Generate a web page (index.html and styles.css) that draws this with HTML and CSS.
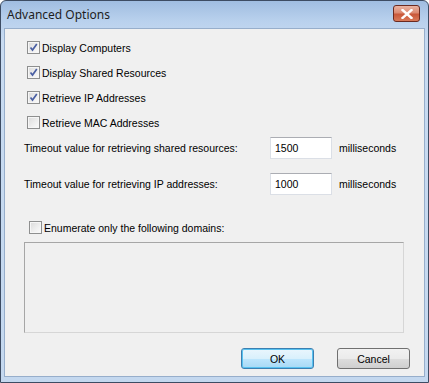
FILE: index.html
```html
<!DOCTYPE html>
<html lang="en">
<head>
    <meta charset="UTF-8">
    <title>Advanced Options</title>
    <link rel="stylesheet" href="styles.css">
</head>
<body>
    <div class="window">
        <div class="titlebar">
            <span class="title">Advanced Options</span>
            <span class="close-btn">
                <svg width="12" height="10" viewBox="0 0 12 10">
                    <path d="M1.5 1 L10.5 9 M10.5 1 L1.5 9" stroke="#fff" stroke-width="2.4" stroke-linecap="square"/>
                </svg>
            </span>
        </div>
        <div class="client">
            <div class="checks">
                <div class="check-row"><span class="box"><svg class="tick" viewBox="0 0 9 9"><path d="M1.5 4.5 L3.5 7 L7.8 1" /></svg></span>Display Computers</div>
                <div class="check-row"><span class="box"><svg class="tick" viewBox="0 0 9 9"><path d="M1.5 4.5 L3.5 7 L7.8 1" /></svg></span>Display Shared Resources</div>
                <div class="check-row"><span class="box"><svg class="tick" viewBox="0 0 9 9"><path d="M1.5 4.5 L3.5 7 L7.8 1" /></svg></span>Retrieve IP Addresses</div>
                <div class="check-row"><span class="box"></span>Retrieve MAC Addresses</div>
            </div>

            <div class="timeout-row">
                <span class="timeout-label">Timeout value for retrieving shared resources:</span>
                <span class="field">1500</span>
                <span class="unit">milliseconds</span>
            </div>
            <div class="timeout-row">
                <span class="timeout-label">Timeout value for retrieving IP addresses:</span>
                <span class="field">1000</span>
                <span class="unit">milliseconds</span>
            </div>

            <div class="check-row domains-row"><span class="box"></span>Enumerate only the following domains:</div>
            <div class="domain-list"></div>

            <div class="buttons">
                <span class="btn default">OK</span>
                <span class="btn">Cancel</span>
            </div>
        </div>
    </div>
</body>
</html>
```

FILE: styles.css
```css
body {
    margin: 0;
    padding: 0;
    background: #fff;
}

.window {
    width: 429px;
    height: 383px;
    box-sizing: border-box;
    border: 1px solid #3d4c63;
    border-radius: 6px 6px 0 0;
    background: linear-gradient(to bottom, #a0bde1 0px, #b9d1ed 20px, #c8dbf1 40px, #c4d8ef 100%);
    display: flex;
    flex-direction: column;
    padding: 0 3px 5px 3px;
}

.titlebar {
    height: 27px;
    display: flex;
    align-items: flex-start;
    justify-content: space-between;
}

.title {
    font-family: "Noto Sans", sans-serif;
    font-size: 12px;
    color: #1e1e1e;
    padding: 5px 0 0 3px;
}

.close-btn {
    margin: 4px 5px 0 0;
    width: 27px;
    height: 17px;
    box-sizing: border-box;
    border: 1px solid #6b2a20;
    border-radius: 3px;
    background: linear-gradient(to bottom, #eab3a2 0%, #dc8a72 45%, #c9583a 55%, #d87a5a 100%);
    display: flex;
    align-items: center;
    justify-content: center;
}

.client {
    flex: 1;
    background: #f0f0f0;
    border: 1px solid #97aecb;
    box-sizing: border-box;
    font-family: "Liberation Sans", Arial, sans-serif;
    font-size: 10.5px;
    color: #000;
    display: flex;
    flex-direction: column;
    padding: 6px 0 0 22px;
}

.check-row {
    height: 25px;
    display: flex;
    align-items: center;
}

.box {
    width: 13px;
    height: 13px;
    box-sizing: border-box;
    border: 1px solid #8e8f8f;
    background: linear-gradient(135deg, #dadada 0%, #eeeeee 55%, #fbfbfb 100%);
    box-shadow: inset 0 0 0 1px #f6f6f6;
    margin-right: 2px;
    display: flex;
    align-items: center;
    justify-content: center;
}

.tick {
    width: 9px;
    height: 9px;
    fill: none;
    stroke: #4a5fa3;
    stroke-width: 1.7;
}

.timeout-row {
    display: flex;
    align-items: center;
    height: 22px;
    margin-left: -3px;
    margin-top: 2px;
    margin-bottom: 12px;
}

.timeout-label {
    width: 246px;
}

.field {
    width: 62px;
    height: 22px;
    box-sizing: border-box;
    background: #fff;
    border: 1px solid #dbdfe6;
    border-top-color: #abadb3;
    padding: 4px 0 0 4px;
}

.unit {
    margin-left: 7px;
}

.domains-row {
    margin-top: 14px;
    height: 13px;
    margin-left: 2px;
}

.domain-list {
    margin: 8px 0 0 -3px;
    width: 380px;
    height: 91px;
    box-sizing: border-box;
    border: 1px solid #a6a6a6;
    border-right-color: #d6d6d6;
    border-bottom-color: #d6d6d6;
    background: #f0f0f0;
}

.buttons {
    display: flex;
    gap: 23px;
    margin: 15px 0 0 214px;
}

.btn {
    width: 73px;
    height: 21px;
    box-sizing: border-box;
    border: 1px solid #707070;
    border-radius: 3px;
    background: linear-gradient(to bottom, #f2f2f2 0%, #ebebeb 50%, #dddddd 51%, #cfcfcf 100%);
    display: flex;
    align-items: center;
    justify-content: center;
}

.btn.default {
    border-color: #3c7fb1;
    background: linear-gradient(to bottom, #eaf6fd 0%, #d9f0fc 50%, #bee6fd 51%, #a7d9f5 100%);
    box-shadow: inset 0 0 0 1px #58c2f0;
}
```
